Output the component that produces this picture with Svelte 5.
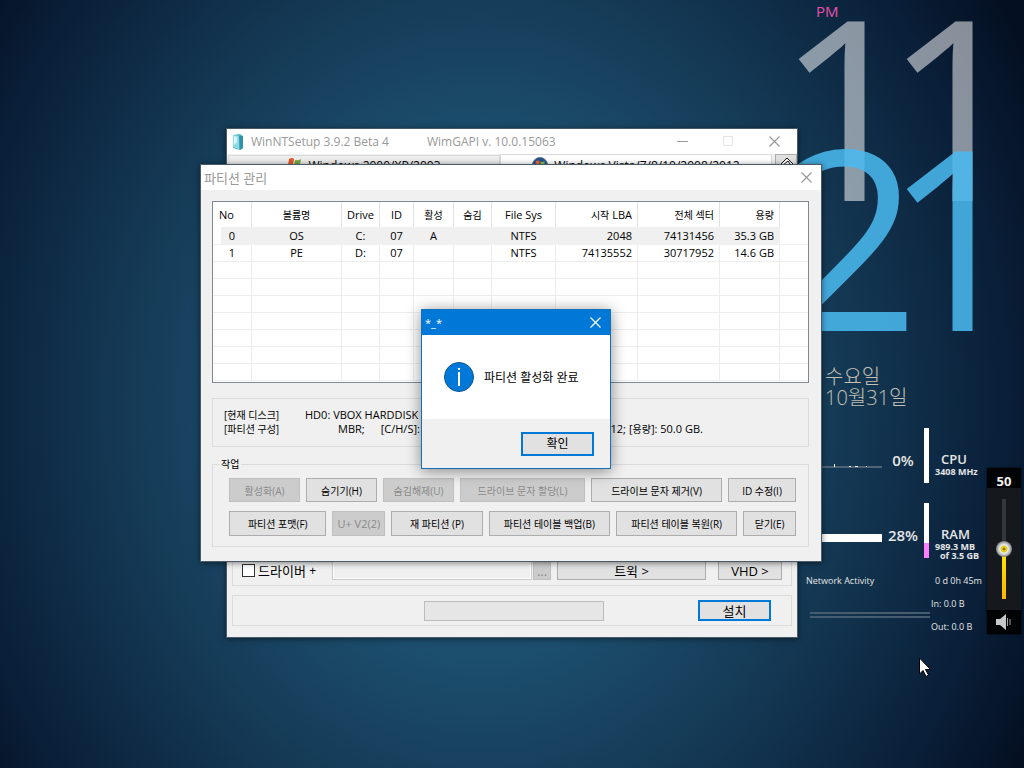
<script lang="ts">
  interface Volume {
    no: number;
    name: string;
    drive: string;
    id: string;
    active: string;
    hidden: string;
    fs: string;
    start: string;
    sectors: string;
    size: string;
  }

  const volumes: Volume[] = [
    { no: 0, name: 'OS', drive: 'C:', id: '07', active: 'A', hidden: '', fs: 'NTFS', start: '2048', sectors: '74131456', size: '35.3 GB' },
    { no: 1, name: 'PE', drive: 'D:', id: '07', active: '', hidden: '', fs: 'NTFS', start: '74135552', sectors: '30717952', size: '14.6 GB' }
  ];

  const emptyRows = Array.from({ length: 7 });

  const topActions = [
    { label: '활성화(A)', disabled: true },
    { label: '숨기기(H)', disabled: false },
    { label: '숨김해제(U)', disabled: true },
    { label: '드라이브 문자 할당(L)', disabled: true },
    { label: '드라이브 문자 제거(V)', disabled: false },
    { label: 'ID 수정(I)', disabled: false }
  ];

  const bottomActions = [
    { label: '파티션 포맷(F)', disabled: false },
    { label: 'U+ V2(2)', disabled: true },
    { label: '재 파티션 (P)', disabled: false },
    { label: '파티션 테이블 백업(B)', disabled: false },
    { label: '파티션 테이블 복원(R)', disabled: false },
    { label: '닫기(E)', disabled: false }
  ];

  const hours = ['1', '1'];
  const minutes = ['2', '1'];
  const ram = 28;

  let selected = $state(0);
  let volume = $state(50);
  let drivers = $state(false);
</script>

{#snippet closeIcon()}
  <svg width="11" height="11" viewBox="0 0 11 11" aria-hidden="true">
    <path d="M.5 .5 10.5 10.5M10.5 .5 .5 10.5" fill="none" stroke="currentColor" stroke-width="1.2" />
  </svg>
{/snippet}

<main class="desktop">
  <section class="clock" aria-label="시계">
    <div class="ampm">PM</div>
    <div class="digits hours">
      {#each hours as digit}<span>{digit}</span>{/each}
    </div>
    <div class="digits minutes">
      {#each minutes as digit}<span>{digit}</span>{/each}
    </div>
    <div class="date">수요일<br />10월31일</div>
  </section>

  <section class="meters">
    <div class="meter">
      <svg class="graph" width="64" height="10" viewBox="0 0 64 10" aria-hidden="true">
        <path d="M0 8H64" stroke="#4d6478" stroke-width="2" />
        <path d="M16 5h1v3h-1zM31 7h2v1h-2zM37 7h3v1h-3zM48 7h1v1h-1z" fill="#fff" />
      </svg>
      <strong class="percent">0%</strong>
      <div class="level"></div>
      <div class="reading">
        <strong>CPU</strong>
        <small>3408 MHz</small>
      </div>
    </div>
    <div class="meter">
      <div class="graph solid"></div>
      <strong class="percent">28%</strong>
      <div class="level"><i style="height: {ram}%"></i></div>
      <div class="reading">
        <strong>RAM</strong>
        <small>989.3 MB</small>
        <small class="total">of 3.5 GB</small>
      </div>
    </div>
    <div class="network">
      <div>Network Activity</div>
      <div class="uptime">0 d 0h 45m</div>
      <div class="lines"></div>
      <div class="traffic">
        <span>In: 0.0 B</span>
        <span>Out: 0.0 B</span>
      </div>
    </div>
  </section>

  <section class="volume">
    <label for="volume">{volume}</label>
    <div class="slider">
      <input id="volume" type="range" min="0" max="100" bind:value={volume} style="--fill: {volume}%" />
    </div>
    <button aria-label="음소거">
      <svg width="16" height="18" viewBox="0 0 16 18">
        <path d="M0 6h4l6-5v16l-6-5H0z" fill="#c8c8c8" />
        <path d="M11.5 5v8M14 6v6" stroke="#a5a5a5" stroke-width="1" fill="none" />
      </svg>
    </button>
  </section>

  <section class="window setup">
    <header class="titlebar">
      <svg class="app-icon" width="12" height="16" viewBox="0 0 12 16" aria-hidden="true">
        <path d="M1 1 8 0l3 2v12l-3 2-7-2z" fill="#4fb4c6" />
        <path d="M1 1 7 2v13l-6-2z" fill="#8fdae5" />
        <path d="M7 2l4 0v12l-3 2z" fill="#2d93a8" />
        <path d="M2 2l3 1v5L2 11z" fill="#d5f5f8" />
      </svg>
      <h1>WinNTSetup 3.9.2 Beta 4</h1>
      <span class="api">WimGAPI v. 10.0.15063</span>
      <div class="controls">
        <button aria-label="최소화"><svg width="11" height="11"><path d="M0 5.5h11" stroke="#999" /></svg></button>
        <button aria-label="최대화" disabled><svg width="11" height="11"><path d="M.5 .5h9v9h-9z" fill="none" stroke="#e3e3e3" /></svg></button>
        <button aria-label="닫기">{@render closeIcon()}</button>
      </div>
    </header>
    <nav class="tabs">
      <button class="tab">
        <svg width="15" height="15" viewBox="0 0 15 15" aria-hidden="true">
          <path d="M2 1q3-2 5 0L6 7q-3-1-5 0z" fill="#e0582a" />
          <path d="M8 2q3 1 6-1l-1 6q-3 1-6 0z" fill="#76a63c" />
          <path d="M1 8q3-1 5 0l-1 6q-3-1-5 0z" fill="#3c72c4" />
          <path d="M7 8q3 1 6 0l-1 6q-3 1-6 0z" fill="#efbd2d" />
        </svg>
        Windows 2000/XP/2003
      </button>
      <button class="tab current">
        <svg width="16" height="16" viewBox="0 0 16 16" aria-hidden="true">
          <circle cx="8" cy="8" r="7.5" fill="#24518a" stroke="#597389" />
          <path d="M4 4q2-1 3.500 0v3.500q-2-1-4 0z" fill="#e9672d" />
          <path d="M8.500 4.500q2 1 4-.5v3.500q-2 1-4 0z" fill="#8bc34a" />
          <path d="M3.500 8.500q2-1 4 0V12q-2-1-3.500 0z" fill="#48a5e5" />
          <path d="M8.500 8.500q2 1 4 0V12q-2 1-4 0z" fill="#f6ce38" />
        </svg>
        Windows Vista/7/8/10/2008/2012
      </button>
      <button class="tool" aria-label="설정">
        <svg width="16" height="16" viewBox="0 0 16 16"><path d="M1 9 9 1l6 6-8 8zM4 9l6-5 2 3-5 5" fill="#fff" stroke="#111" /></svg>
      </button>
    </nav>
    <div class="spacer"></div>
    <div class="drivers">
      <label><input type="checkbox" bind:checked={drivers} />드라이버 <span>+</span></label>
      <input class="path" type="text" aria-label="드라이버 경로" disabled />
      <button class="btn browse" disabled>...</button>
      <button class="btn tweak">트윅 &gt;</button>
      <button class="btn vhd">VHD &gt;</button>
    </div>
    <footer class="install">
      <div class="progress" role="progressbar" aria-label="진행률" aria-valuenow="0"></div>
      <button class="btn primary">설치</button>
    </footer>
  </section>

  <section class="window partitions">
    <header class="titlebar">
      <h2>파티션 관리</h2>
      <div class="controls"><button aria-label="닫기">{@render closeIcon()}</button></div>
    </header>
    <div class="content">
      <div class="list">
        <table>
          <colgroup>
            <col class="c-no" /><col class="c-name" /><col class="c-drive" /><col class="c-id" /><col class="c-active" />
            <col class="c-hidden" /><col class="c-fs" /><col class="c-start" /><col class="c-sectors" /><col class="c-size" /><col />
          </colgroup>
          <thead>
            <tr>
              <th class="first">No</th>
              <th class="ko">볼륨명</th>
              <th>Drive</th>
              <th>ID</th>
              <th class="ko">활성</th>
              <th class="ko">숨김</th>
              <th>File Sys</th>
              <th class="num"><span class="ko">시작</span> LBA</th>
              <th class="num ko">전체 섹터</th>
              <th class="num ko">용량</th>
              <th></th>
            </tr>
          </thead>
          <tbody>
            {#each volumes as v (v.no)}
              <tr class:selected={selected === v.no} onclick={() => (selected = v.no)}>
                <td>{v.no}</td>
                <td>{v.name}</td>
                <td>{v.drive}</td>
                <td>{v.id}</td>
                <td>{v.active}</td>
                <td>{v.hidden}</td>
                <td>{v.fs}</td>
                <td class="num">{v.start}</td>
                <td class="num">{v.sectors}</td>
                <td class="num">{v.size}</td>
                <td class="rest"></td>
              </tr>
            {/each}
            {#each emptyRows as _}
              <tr><td></td><td></td><td></td><td></td><td></td><td></td><td></td><td></td><td></td><td></td><td></td></tr>
            {/each}
          </tbody>
        </table>
      </div>

      <dl class="disk">
        <dt>[현재 디스크]</dt>
        <dd>HD0: VBOX HARDDISK (ATA)</dd>
        <dt>[파티션 구성]</dt>
        <dd class="geometry">
          <span>MBR;</span>
          <span>[C/H/S]:</span>
          <span class="chs">6527/255/63; [섹터]: 512;</span>
          <span>[<span class="ko">용량</span>]: 50.0 GB.</span>
        </dd>
      </dl>

      <fieldset class="actions">
        <legend>작업</legend>
        <div class="row upper">
          {#each topActions as action}
            <button class="btn" disabled={action.disabled}>{action.label}</button>
          {/each}
        </div>
        <div class="row lower">
          {#each bottomActions as action}
            <button class="btn" class:latin={action.label.startsWith('U')} disabled={action.disabled}>{action.label}</button>
          {/each}
        </div>
      </fieldset>
    </div>
  </section>

  <div class="window message" role="alertdialog" aria-labelledby="message-title" aria-describedby="message-text">
    <header class="titlebar">
      <h2 id="message-title">*_*</h2>
      <div class="controls"><button aria-label="닫기">{@render closeIcon()}</button></div>
    </header>
    <div class="message-body">
      <svg width="30" height="30" viewBox="0 0 30 30" aria-hidden="true">
        <circle cx="15" cy="15" r="14.500" fill="#0078d7" stroke="#0b5796" />
        <path d="M14 6h2v2h-2zM14 10h2v14h-2z" fill="#fff" />
      </svg>
      <p id="message-text">파티션 활성화 완료</p>
    </div>
    <footer class="message-footer">
      <button class="btn primary">확인</button>
    </footer>
  </div>

  <svg class="cursor" width="12" height="20" viewBox="0 0 12 20" aria-hidden="true">
    <path d="M.5 1v16l3.500-3.500 3 6 2.500-1.500-3-5.500h5z" fill="#fff" stroke="#000" />
  </svg>
</main>

<style>
  :global(body) {
    margin: 0;
    background: #06152a;
  }

  .desktop {
    position: relative;
    min-height: 100vh;
    overflow: hidden;
    background: radial-gradient(ellipse 60% 96% at 47% 52%, #20587a 0%, #1c4e6e 35%, #143853 60%, #0a203a 84%, #041022 100%);
    font-family: 'Open Sans', 'Noto Sans CJK KR', sans-serif;
    font-size: 11px;
    color: #000;
  }

  button {
    font-family: inherit;
    color: inherit;
    padding: 0;
  }

  h1,
  h2,
  p,
  dl,
  dd {
    margin: 0;
    font-weight: 400;
  }

  .ko {
    font-size: 10px;
  }

  /* windows */
  .window {
    position: absolute;
    box-sizing: border-box;
    display: flex;
    flex-direction: column;
    border: 1px solid #4a5a66;
    background: #f0f0f0;
    box-shadow: 0 1px 6px rgba(0, 0, 0, 0.5);
  }

  .titlebar {
    display: flex;
    align-items: center;
    height: 25px;
    flex: none;
    background: #fff;
    color: #999;
  }

  .titlebar h1,
  .titlebar h2,
  .api {
    font-size: 12px;
    white-space: nowrap;
  }

  .controls {
    display: flex;
    margin-left: auto;
  }

  .controls button {
    display: grid;
    place-items: center;
    width: 30px;
    height: 24px;
    border: 0;
    background: none;
  }

  .btn {
    box-sizing: border-box;
    border: 1px solid #adadad;
    background: #e1e1e1;
    white-space: nowrap;
    overflow: hidden;
  }

  .btn:disabled {
    border-color: #bfbfbf;
    background: #ccc;
    color: #8a8a8a;
  }

  .btn.primary {
    width: 73px;
    border: 2px solid #0078d7;
  }

  .setup {
    left: calc(50% - 286px);
    top: calc(50vh - 256px);
    width: 572px;
    height: 510px;
  }

  .app-icon {
    margin: 0 7px 0 5px;
  }

  .api {
    margin-left: 38px;
  }

  .setup .controls button {
    width: 46px;
  }

  .tabs {
    display: flex;
    height: 22px;
    flex: none;
    padding-left: 1px;
  }

  .tab {
    display: flex;
    flex: 1 1 0;
    align-items: center;
    justify-content: center;
    gap: 6px;
    margin-top: 1px;
    border: 1px solid #d9d9d9;
    background: linear-gradient(#f0f0f0, #dcdcdc);
    font-size: 12px;
  }

  .tab.current {
    margin-top: 0;
    background: #fff;
  }

  .tool {
    display: grid;
    place-items: center;
    width: 22px;
    height: 22px;
    margin-left: 3px;
    border: 1px solid #adadad;
    background: #e1e1e1;
  }

  .spacer {
    flex: 1;
  }

  .drivers {
    display: flex;
    align-items: flex-end;
    margin: 0 5px;
    padding: 0 9px 5px;
    border: 1px solid #dcdcdc;
    border-top: 0;
    font-size: 13px;
  }

  .drivers label {
    display: flex;
    align-items: center;
    width: 90px;
    height: 19px;
    white-space: pre;
  }

  .drivers label span {
    font-size: 12px;
  }

  .drivers input[type='checkbox'] {
    appearance: none;
    box-sizing: border-box;
    width: 13px;
    height: 13px;
    margin: 0 3px 0 0;
    border: 1px solid #333;
    background: #fff;
  }

  .path {
    box-sizing: border-box;
    flex: 1;
    min-width: 0;
    height: 19px;
    border: 1px solid #ccc;
    background: #f0f0f0;
    box-shadow: inset 0 0 0 1px #fff;
  }

  .drivers .btn {
    height: 19px;
    font-size: 13px;
    line-height: 16px;
  }

  .browse {
    width: 18px;
    margin-left: 1px;
  }

  .tweak {
    width: 149px;
    margin: 0 12px 0 6px;
  }

  .vhd {
    width: 64px;
  }

  .install {
    display: flex;
    align-items: center;
    justify-content: flex-end;
    gap: 94px;
    height: 29px;
    margin: 9px 5px 11px;
    padding-right: 20px;
    border: 1px solid #dcdcdc;
  }

  .progress {
    box-sizing: border-box;
    width: 180px;
    height: 20px;
    border: 1px solid #bcbcbc;
    background: #e6e6e6;
  }

  .install .btn {
    height: 21px;
    font-size: 13px;
    line-height: 16px;
  }

  .partitions {
    left: calc(50% - 312px);
    top: calc(50vh - 220px);
    width: 622px;
  }

  .partitions h2 {
    margin-left: 3px;
    font-size: 13px;
    line-height: 20px;
  }

  .content {
    padding: 11px 12px 14px 11px;
  }

  .list {
    padding-bottom: 1px;
    border: 1px solid #828790;
    background: #fff;
  }

  table {
    width: 100%;
    table-layout: fixed;
    border-collapse: separate;
    border-spacing: 0;
    line-height: 16px;
    text-align: center;
  }

  .c-no { width: 39px; }
  .c-name { width: 90px; }
  .c-drive, .c-hidden { width: 38px; }
  .c-id { width: 34px; }
  .c-active { width: 40px; }
  .c-fs { width: 64px; }
  .c-start, .c-sectors { width: 82px; }
  .c-size { width: 60px; }

  th,
  td {
    padding: 0;
    border-right: 1px solid #ededed;
    white-space: nowrap;
  }

  th {
    height: 25px;
    border-color: #e2e2e2;
    font-weight: 400;
  }

  td {
    height: 16px;
    border-bottom: 1px solid #ededed;
  }

  tbody tr:first-child td {
    height: 17px;
  }

  th:last-child,
  td:last-child {
    border-right: 0;
  }

  .first {
    padding-left: 6px;
    text-align: left;
  }

  .num {
    padding-right: 5px;
    text-align: right;
  }

  .selected td {
    border-color: #f0f0f0;
    background: #f0f0f0;
  }

  .selected td:first-child {
    background: linear-gradient(90deg, #fff 8px, #f0f0f0 8px);
  }

  .selected .rest {
    background: #fff;
  }

  .disk {
    display: grid;
    grid-template-columns: 81px 1fr;
    margin-top: 15px;
    padding: 9px 11px 10px;
    border: 1px solid #dcdcdc;
    line-height: 14px;
    white-space: nowrap;
  }

  .disk dt {
    font-size: 10px;
  }

  .geometry {
    display: flex;
    padding-left: 33px;
    gap: 16px;
  }

  .geometry .chs {
    width: 190px;
    margin-right: -13px;
    text-align: right;
  }

  .actions {
    margin: 10px 0 0;
    padding: 7px 12px 10px 16px;
    border: 1px solid #dcdcdc;
  }

  .actions legend {
    margin-left: -10px;
    padding: 0 2px;
    font-size: 10px;
    line-height: 14px;
  }

  .row {
    display: grid;
    gap: 6px;
  }

  .row .btn {
    min-width: 0;
    height: 24px;
    font-size: 10px;
  }

  .row .btn.latin {
    font-size: 11px;
  }

  .upper {
    grid-template-columns: 71fr 71fr 71fr 125fr 131fr 68fr;
    margin-bottom: 9px;
  }

  .lower {
    grid-template-columns: 98fr 53fr 92fr 122fr 122fr 53fr;
  }

  .lower .btn {
    height: 25px;
  }

  .message {
    left: calc(50% - 91px);
    top: calc(50vh - 75px);
    width: 190px;
    border-color: #1271b8;
    box-shadow: 0 2px 14px rgba(0, 0, 0, 0.45);
  }

  .message .titlebar {
    background: #0078d7;
    color: #fff;
  }

  .message h2 {
    margin-left: 3px;
    font-size: 11px;
  }

  .message-body {
    display: flex;
    align-items: center;
    gap: 10px;
    padding: 27px 22px;
    background: #fff;
    font-size: 12px;
    white-space: nowrap;
  }

  .message-footer {
    display: flex;
    justify-content: flex-end;
    padding: 13px 16px 12px;
  }

  .message-footer .btn {
    height: 24px;
    font-size: 12px;
    line-height: 18px;
  }

  /* desktop gadgets */
  .clock {
    position: absolute;
    top: 0;
    right: 0;
    width: 224px;
    color: #c3c1b4;
  }

  .ampm {
    padding: 1px 0 0 16px;
    font-size: 15px;
    font-weight: 400;
    line-height: 20px;
    color: #e84fa8;
  }

  .digits {
    display: grid;
    grid-template-columns: 108px 108px;
    height: 180px;
    margin-left: -24px;
    font-size: 252px;
    font-weight: 400;
    line-height: 166px;
  }

  .hours {
    color: rgba(255, 255, 255, 0.52);
  }

  .minutes {
    margin-top: -50px;
    color: rgba(74, 185, 238, 0.87);
  }

  .date {
    padding: 35px 0 0 25px;
    font-size: 20px;
    font-weight: 300;
    line-height: 21px;
  }

  .meters {
    position: absolute;
    top: 428px;
    right: 40px;
    width: 178px;
    color: #e6e6e6;
  }

  .meter {
    display: grid;
    grid-template: 55px / 64px 42px 5px 1fr;
    align-items: center;
    margin: 0 0 20px 12px;
  }

  .graph.solid {
    height: 8px;
    margin-top: 14px;
    background: #fff;
  }

  svg.graph {
    margin-top: 16px;
  }

  .percent {
    padding-top: 9px;
    font-size: 15px;
    font-weight: 600;
    text-align: center;
  }

  .level {
    display: flex;
    align-items: flex-end;
    height: 55px;
    background: #fff;
  }

  .level i {
    width: 100%;
    background: #ff80ff;
  }

  .reading {
    display: flex;
    flex-direction: column;
    align-self: start;
    padding: 23px 0 0 6px;
    line-height: 9px;
    white-space: nowrap;
  }

  .reading strong {
    padding-left: 6px;
    font-size: 13px;
    font-weight: 600;
    line-height: 16px;
  }

  .reading small {
    font-size: 9px;
    font-weight: 700;
  }

  .reading .total {
    padding-left: 5px;
  }

  .network {
    display: grid;
    grid-template-columns: 125px 1fr;
    font-size: 9px;
    line-height: 23px;
    white-space: nowrap;
    margin-top: -9px;
  }

  .uptime {
    padding-left: 4px;
  }

  .lines {
    box-sizing: border-box;
    align-self: center;
    width: 120px;
    height: 6px;
    margin-left: 4px;
    border: solid #465c70;
    border-width: 2px 0;
  }

  .traffic {
    display: flex;
    flex-direction: column;
  }

  .volume {
    position: absolute;
    top: 468px;
    right: 3px;
    display: flex;
    flex-direction: column;
    width: 34px;
    background: #15191e;
    box-shadow: 0 0 2px #000;
  }

  .volume label {
    height: 20px;
    background: #020304;
    font-size: 13px;
    font-weight: 700;
    line-height: 26px;
    text-align: center;
    color: #f0f0f0;
  }

  .slider {
    display: grid;
    place-items: center;
    height: 122px;
  }

  .slider input {
    appearance: none;
    writing-mode: vertical-lr;
    direction: rtl;
    width: 16px;
    height: 100px;
    margin: 0;
    background: linear-gradient(to top, #ffb400, #ffe900 var(--fill), #33383e var(--fill)) center / 4px 100% no-repeat;
  }

  .slider input::-webkit-slider-thumb {
    appearance: none;
    width: 16px;
    height: 16px;
    border-radius: 50%;
    background: radial-gradient(circle, #8a7a10 1px, #f5d90f 2px, #e0c52a 3px, #eee 4px, #bdbdbd 6px, #777 8px);
  }

  .volume button {
    display: grid;
    place-items: center;
    height: 24px;
    border: 0;
    background: #020304;
  }

  .cursor {
    position: absolute;
    left: calc(50% + 407px);
    top: calc(50vh + 273px);
  }
</style>
